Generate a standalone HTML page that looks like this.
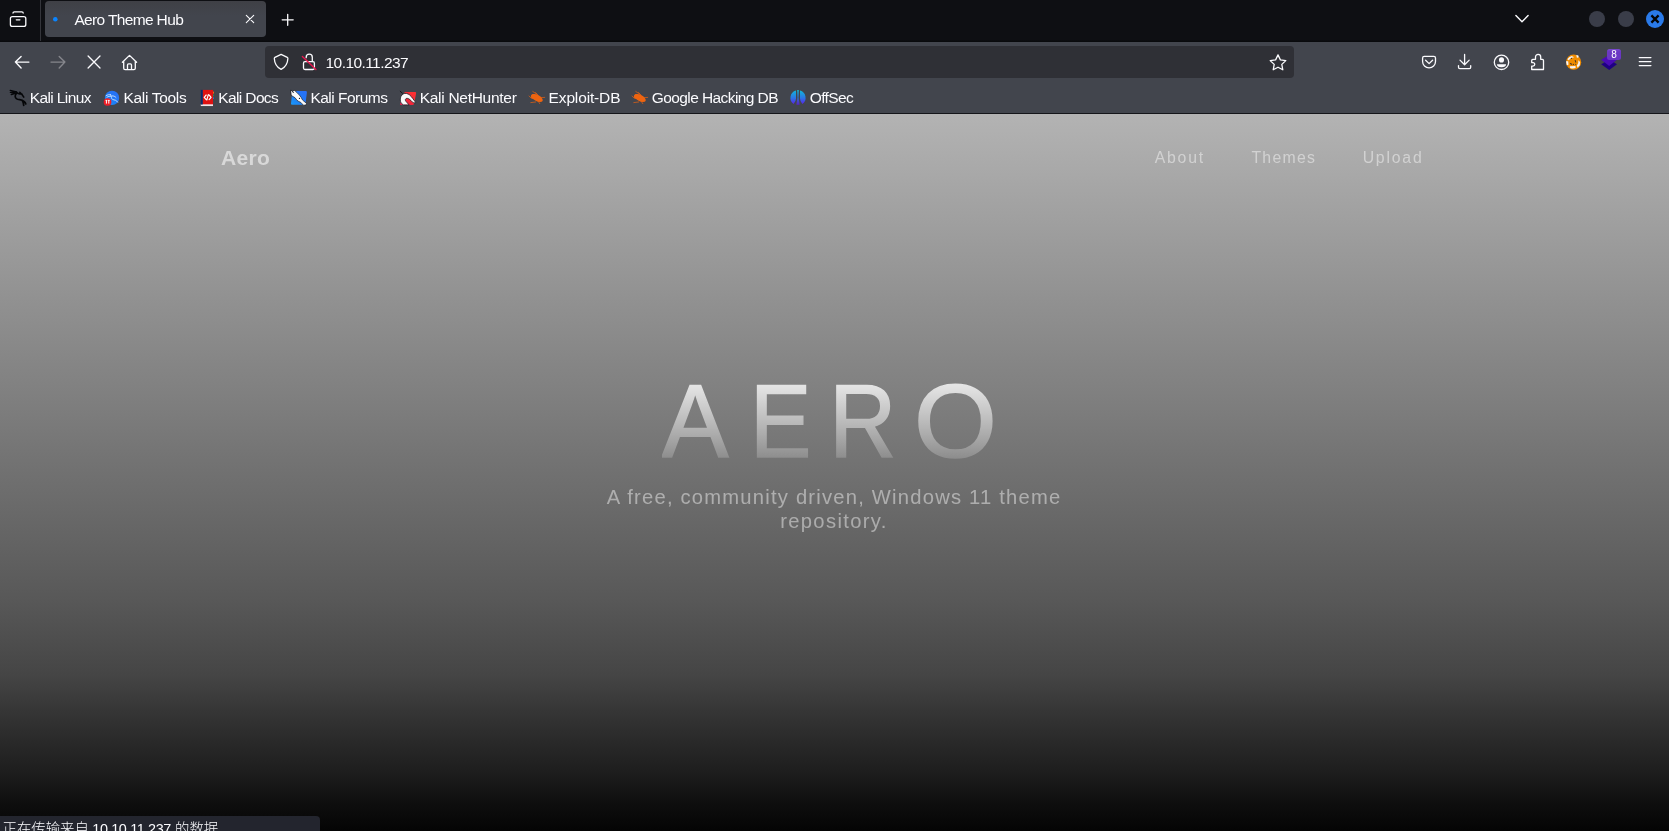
<!DOCTYPE html>
<html lang="zh">
<head>
<meta charset="utf-8">
<title>Aero Theme Hub</title>
<style>
*{box-sizing:border-box;margin:0;padding:0}
html,body{width:1669px;height:831px;overflow:hidden;background:#0d0e12;font-family:"Liberation Sans","Noto Sans CJK SC",sans-serif;}
#chrome{position:absolute;left:0;top:0;width:1669px;height:114px;background:#42454d;color:#fbfbfe}
#tabbar{position:absolute;left:0;top:0;width:1669px;height:42px;background:linear-gradient(#0e0f13 40px,#090a0d 41px)}
#tabsep{position:absolute;left:40px;top:0;width:1px;height:41px;background:#34353b}
#tab{position:absolute;left:45px;top:1px;width:221px;height:36px;background:linear-gradient(to bottom,#3f4046,#42454d 40%);border-radius:4px}
#tabtitle{position:absolute;left:74px;top:10.5px;font-size:15.5px;line-height:18px;white-space:nowrap;color:#fbfbfe}
#urlbar{position:absolute;left:265px;top:46px;width:1029px;height:32px;background:#2f3036;border-radius:4px}
#url{position:absolute;left:327px;top:53.5px;font-size:15.5px;line-height:18px;color:#fbfbfe;white-space:nowrap}
#chromeline{position:absolute;left:0;top:113px;width:1669px;height:1px;background:#15161a}
.bm{position:absolute;top:88.5px;font-size:15.5px;line-height:18px;white-space:nowrap;color:#fbfbfe}
#tabtitle,#url,.bm,#status span,#logo,.nav,.sub,#badge{opacity:.999}
#icons{position:absolute;left:0;top:0;width:1669px;height:114px;overflow:visible}
#badge{position:absolute;left:1607px;top:49px;width:14px;height:11px;background:linear-gradient(#7a4bd0,#6b38c4 25%);border-radius:2.5px;color:#fff;font-size:10px;line-height:11px;text-align:center}
#page{position:absolute;left:0;top:114px;width:1669px;height:717px;overflow:hidden;
 background:linear-gradient(to bottom,#b3b3b3 0px,#7c7c7c 300px,#585858 486px,#4e4e4e 526px,#454545 561px,#363636 596px,#282828 631px,#1e1e1e 657px,#0f0f0f 687px,#040404 717px);}
#logo{position:absolute;left:222px;top:31.7px;font-size:21px;line-height:24px;font-weight:bold;color:rgba(255,255,255,.54);white-space:nowrap}
.nav{position:absolute;top:33.7px;font-size:15.8px;line-height:20px;color:rgba(255,255,255,.46);letter-spacing:1.2px;white-space:nowrap}
#h1{position:absolute;left:0;width:1669px;top:235px;height:146px;font-size:104px;line-height:146px;white-space:nowrap;overflow:visible}
#h1 span{display:inline-block;position:relative;vertical-align:top;width:100px;margin-right:-100px;top:0;height:146px;text-rendering:geometricPrecision;font-size:104px;line-height:146px;white-space:nowrap;transform-origin:0 0;
 background:linear-gradient(to bottom,#fff 10.5px,rgba(255,255,255,0) 132px);-webkit-background-clip:text;background-clip:text;color:transparent;-webkit-text-fill-color:transparent;-webkit-text-stroke:1.6px transparent}
.sub{position:absolute;font-size:20.2px;line-height:24px;letter-spacing:1.4px;color:rgba(255,255,255,.45);white-space:nowrap}
#s1{top:371.1px}#s2{top:394.7px}
#status{position:absolute;left:0;top:816px;width:320px;height:16px;background:#23252e;border-top-right-radius:4px;overflow:hidden}
#status{white-space:nowrap;font-size:14.4px;line-height:20px}
#status span{display:inline-block;position:relative;vertical-align:top;width:100px;margin-right:-100px;top:3.3px;color:#fbfbfe;font-size:14.4px;line-height:20px;white-space:nowrap;font-weight:300}
</style>
</head>
<body>
<div id="chrome">
 <div id="tabbar"></div>
 <div id="tabsep"></div>
 <div id="tab"></div>
 <div id="tabtitle" style="left:74.42px;letter-spacing:-0.646px">Aero Theme Hub</div>
 <div id="urlbar"></div>
 <div id="url" style="left:325.59px;letter-spacing:-0.576px">10.10.11.237</div>
 <div class="bm" id="b1" style="left:29.65px;letter-spacing:-0.592px">Kali Linux</div>
 <div class="bm" id="b2" style="left:123.38px;letter-spacing:-0.298px">Kali Tools</div>
 <div class="bm" id="b3" style="left:218.3px;letter-spacing:-0.627px">Kali Docs</div>
 <div class="bm" id="b4" style="left:310.38px;letter-spacing:-0.509px">Kali Forums</div>
 <div class="bm" id="b5" style="left:419.65px;letter-spacing:-0.277px">Kali NetHunter</div>
 <div class="bm" id="b6" style="left:548.59px;letter-spacing:-0.143px">Exploit-DB</div>
 <div class="bm" id="b7" style="left:651.76px;letter-spacing:-0.588px">Google Hacking DB</div>
 <div class="bm" id="b8" style="left:809.66px;letter-spacing:-0.581px">OffSec</div>
 <div id="chromeline"></div>
 <svg id="icons" width="1669" height="114" viewBox="0 0 1669 114" fill="none" stroke="#fbfbfe" stroke-width="1.3" stroke-linecap="round" stroke-linejoin="round">
<!--ICONS_START-->
 <defs>
  <linearGradient id="og" gradientUnits="userSpaceOnUse" x1="0" y1="90" x2="0" y2="105"><stop offset="0" stop-color="#0fb9d8"/><stop offset=".55" stop-color="#2d74e6"/><stop offset="1" stop-color="#5f14e8"/></linearGradient>
  <linearGradient id="kt" x1="1" y1="0" x2="0" y2="1"><stop offset="0" stop-color="#2a6ff5"/><stop offset=".5" stop-color="#1f78f5"/><stop offset="1" stop-color="#1a9af8"/></linearGradient>
 <linearGradient id="nh" x1="1" y1="0" x2="0" y2="1"><stop offset="0" stop-color="#ff3232"/><stop offset=".5" stop-color="#f52a36"/><stop offset="1" stop-color="#df1a4c"/></linearGradient>
 </defs>
 <!-- firefox view -->
 <rect x="10.4" y="16.6" width="15.4" height="9.8" rx="2"/>
 <path d="M13 13.1q0-1.2 1.4-1.2h7.4q1.4 0 1.4 1.2"/>
 <path d="M16.3 19.8h3.6"/>
 <!-- tab favicon dot, close, plus -->
 <circle cx="55.3" cy="19.2" r="2.3" fill="#0a84ff" stroke="none"/>
 <path d="M246.300 15.300l7.400 7.400M253.700 15.300l-7.400 7.400" stroke-width="1.100"/>
 <path d="M282.200 19.800h11M287.700 14.300v11" stroke-width="1.300"/>
 <path d="M1515.9 15.6l6.1 6.1 6.1-6.1" stroke-width="1.4"/>
 <circle cx="1597" cy="19" r="8" fill="#3a3d49" stroke="none"/>
 <circle cx="1626" cy="19" r="8" fill="#3a3d49" stroke="none"/>
 <circle cx="1655" cy="19" r="9" fill="#2a7ae9" stroke="none"/>
 <path d="M1651.4 15.4l7.2 7.2M1658.600 15.4l-7.2 7.2" stroke="#050608" stroke-width="2.3" stroke-linecap="butt"/>
 <!-- nav buttons -->
 <path d="M15.400 62.1h13.5M21.1 56.400l-5.700 5.700 5.700 5.800" stroke-width="1.400"/>
 <path d="M51 62.1h13.900M59.200 56.400l5.700 5.700-5.700 5.800" stroke="#85868c" stroke-width="1.400"/>
 <path d="M88.100 56l11.900 12M100 56l-11.900 12" stroke-width="1.300"/>
 <path d="M122.400 62.300l7.100-6.900 7.100 6.900M123.700 61.300v7q0 1.400 1.400 1.400h8.800q1.400 0 1.400-1.400v-7M127.500 69.500v-4.600q0-1 1-1h2q1 0 1 1v4.600" stroke-width="1.300"/>
 <!-- shield -->
 <path d="M281.100 54.400l6.200 3q.600.300.600 1c-.200 4.800-2.300 8.700-6.800 11-4.500-2.300-6.600-6.200-6.800-11q0-.700.600-1z" stroke-width="1.250"/>
 <!-- lock -->
 <rect x="303.500" y="61.700" width="10.900" height="7.800" rx="1.500" stroke-width="1.300"/>
 <path d="M306.200 57.700v-.500a3.050 3.050 0 0 1 6.100 0v4.300" stroke-width="1.300"/>
 <path d="M302.400 56.400l13.500 13.100" stroke="#e8174f" stroke-width="1.400"/>
 <!-- star -->
 <path d="M1278 54.900l2.400 5 5.400.7-4 3.800 1 5.400-4.800-2.600-4.800 2.600 1-5.400-4-3.800 5.400-.7z" stroke-width="1.300"/>
 <!-- pocket -->
 <path d="M1422.600 58.100q0-1.700 1.700-1.700h9.500q1.700 0 1.700 1.700v3.300a6.450 6.450 0 0 1-12.900 0z" stroke-width="1.300"/>
 <path d="M1425.600 60.300l3.500 3.300 3.500-3.300" stroke-width="1.300"/>
 <!-- download -->
 <path d="M1464.600 54.400v10M1460 60.100l4.600 4.600 4.600-4.600M1458.500 65.600v1.700q0 1.300 1.300 1.300h9.600q1.300 0 1.300-1.300v-1.700" stroke-width="1.300"/>
 <!-- account -->
 <circle cx="1501.500" cy="62.300" r="7.200" stroke-width="1.300"/>
 <circle cx="1501.500" cy="59.900" r="2.550" fill="#fbfbfe" stroke="none"/>
 <path d="M1496.900 64.300h9.200a4.600 3 0 0 1-9.200 0z" fill="#fbfbfe" stroke="none"/>
 <!-- extensions puzzle -->
 <path d="M1531.700 69.500h11.800v-9.100q0-1.100-1.100-1.100h-1.700v-2.300a2.600 2.600 0 0 0-5.200 0v2.300h-2.700q-1.100 0-1.100 1.100v2.200h1.300a1.750 1.750 0 0 1 0 3.500h-1.300z" stroke-width="1.300"/>
 <!-- fox icon -->
 <circle cx="1573.600" cy="62.200" r="7.600" fill="#f08c00" stroke="none"/>
 <path d="M1567.400 59.300q1.500-2.700 4.300-3.400l2.500 1.300-3.200.700-2.300 2.300zM1576.300 54.900l2.100.600.200 2-1.700.300zM1566 61.200h2.200l.300 3.600-1.700.400zM1569.700 66.300l5.700-.200.400 1.700q-2.800 1.300-5.600.100zM1578.300 60.200l1.800 1.700-.400 3.600-2.200 2.300-.600-2.300 1.400-2.600z" fill="#f4f4f8" stroke="none"/>
 <path d="M1575.200 60.500l.6 1.600M1570.400 63.500l1.300.800M1573.400 64.400h.1M1575.600 64.300h.1M1571.400 58.400h.1" stroke="#4a3a2a" stroke-width="1.100"/>
 <!-- layers -->
 <path d="M1601.200 64.200l8-4.800 7.800 4.800-7.800 5.700z" fill="#1f0083" stroke="none"/>
 <path d="M1601.200 59.800l8-4.800 7.800 4.800-7.800 6.100z" fill="#4a0bb6" stroke="none"/>
 <!-- hamburger -->
 <path d="M1639.300 57.600h11.600M1639.300 61.600h11.600M1639.300 65.600h11.600" stroke-width="1.400"/>
 <!-- kali linux dragon -->
 <g stroke="#050608" stroke-width="1.500">
  <path d="M10.200 90.400l6.400 1.500-6.200.500 5.400.500-4.600 1.600 5-1.300" stroke-width="1.300" fill="#050608"/>
  <path d="M16.400 92.400c1.300.900 2.300 1.400 3.400 1.500 1.100.100 1.700-.100 2.300.300M19.800 92.300c1.600 1.300 3 3 4 4.900"/>
  <path d="M16.600 93.300c-1 .800-1.500 1.900-1.400 3.200.200 1.900 1.800 3 4.400 3.200 2.200.200 3.500.800 4.700 1.900.900.800 1.300 1.600 1.500 2.400M22.300 100.600c.900 1.500 1.300 3.200 1.400 4.800" stroke-width="1.700"/>
 </g>
 <!-- kali tools -->
 <circle cx="112" cy="97.900" r="7.200" fill="url(#kt)" stroke="none"/>
 <g stroke="#dbe9fb" stroke-width="1" opacity=".85">
  <path d="M106.200 95.600c1.600-.900 3-1.200 4.400-.900M107 97.200c1.300-.800 2.500-1.100 3.700-1M110.700 94.700c.500 1 .700 1.900.800 2.800.100 1 .400 1.600 1 1.900 1 .500 2 .500 2.900.800 1 .400 1.700 1.100 2.300 2M112.200 95.900c1.500-.100 2.700.400 3.800 1.600"/>
 </g>
 <circle cx="107.550" cy="102" r="3.850" fill="#ee1c25" stroke="none"/>
 <path d="M106.400 100.400v3.200M108.800 100.400v3.200M105.600 100.400h1.700M108 100.400h1.700" stroke="#fff" stroke-width="1" stroke-linecap="butt"/>
 <!-- kali docs -->
 <path d="M212 91.500h1.400q.600 0 .600.600v1q0 .600-.600.600h-1.400z" fill="#f26a12" stroke="none"/>
 <path d="M212 94.400h1.400q.600 0 .600.500v.800q0 .500-.600.500h-1.400z" fill="#2d8a4e" stroke="none"/>
 <path d="M212 97.300h1.400q.600 0 .600.500v.800q0 .500-.600.500h-1.400z" fill="#3567c8" stroke="none"/>
 <rect x="200.800" y="104" width="12.200" height="2.050" fill="#ece4e8" stroke="none"/>
 <rect x="202.500" y="89.900" width="10.500" height="14.400" fill="#df1212" stroke="none"/>
 <rect x="200.800" y="89.900" width="1.900" height="14.700" fill="#0b2a6c" stroke="none"/>
 <path d="M206.200 95l-2 2.300 2 2.300M209.100 95l2 2.300-2 2.300M208.300 94.600l-1.500 5.400" stroke="#fff" stroke-width="1.150"/>
 <!-- kali forums -->
 <path d="M293.600 91h12q1.500 0 1.300 1.400l-1.400 11q-.200 1.400-1.700 1.400h-11.600q-1.400 0-1.200-1.400l1.200-11q.100-1.400 1.400-1.400z" fill="url(#kt)" stroke="none"/>
 <path d="M290.900 90.300l2.600.600 1.200-.400c1.600 1.500 3.300 3 4.700 4.600 1.300 1.500 2.400 3.200 3.200 5l3.900 3.300-.600 1.700-2.500.100-2.600-2.800c-1.400-.500-2.700-1.200-3.800-2.100l-1.900-2.500-3.700-2.300z" fill="#fafafa" stroke="#1d2027" stroke-width=".700"/>
 <circle cx="299.500" cy="98.400" r=".700" fill="#1d2027" stroke="none"/>
 <path d="M291.700 90.700l1.700 2" stroke="#1d2027" stroke-width="1"/>
 <!-- kali nethunter -->
 <path d="M405.600 91.900h9.400q1.300 0 1.100 1.300l-1.900 10.400q-.200 1.300-1.500 1.300h-11.800q-1.200 0-.800-1.200l4.200-10.900q.400-.900 1.300-.900z" fill="url(#nh)" stroke="none"/>
 <path d="M402.900 104.700c-1.600-1.200-2.500-2.800-2.600-4.800-.100-2.700 1-4.800 2.900-5.900 2-1.100 4.400-.600 6.400.900 1.200 1 2.200 2.200 3.100 3.500l3.100 4.200c-1.400.500-2.700.200-3.600-.700-1-1.100-1.900-2.100-3-2.800-1.300-.800-2.500-1-3.300-.400-.800.700-.700 1.700 0 2.600l3 3.400z" fill="#fafafa" stroke="#1f2128" stroke-width=".800"/>
 <path d="M400.200 91.300l2.200 1.900" stroke="#14161a" stroke-width="1"/>
 <!-- exploit-db bugs -->
 <g stroke="#ee6410">
  <ellipse cx="537.100" cy="98.100" rx="6.200" ry="3.100" transform="rotate(28 537.100 98.100)" fill="#ee6410" stroke="none"/>
  <circle cx="533.400" cy="96.400" r="2.500" fill="#ee6410" stroke="none"/>
  <path d="M532.800 91.500l3.800 2.600M535.500 92.500l2.500 2.500M529.100 96l2 2.100M540.300 97.700l4.400-.300M530.800 102.600l4.900-.600M538.300 101.400l1.500 2.300" stroke-width=".900" opacity=".75"/>
 </g>
 <g transform="translate(103 0)" stroke="#ee6410">
  <ellipse cx="537.100" cy="98.100" rx="6.200" ry="3.100" transform="rotate(28 537.100 98.100)" fill="#ee6410" stroke="none"/>
  <circle cx="533.400" cy="96.400" r="2.500" fill="#ee6410" stroke="none"/>
  <path d="M532.800 91.500l3.800 2.600M535.500 92.500l2.500 2.500M529.100 96l2 2.100M540.300 97.700l4.400-.300M530.800 102.600l4.900-.600M538.300 101.400l1.500 2.300" stroke-width=".900" opacity=".75"/>
 </g>
 <!-- offsec -->
 <g fill="url(#og)" stroke="none">
  <path d="M796 90.500a7.600 7.600 0 0 0-2.400 13.500q2.400-2.700 2.400-5.500z"/>
  <path d="M800 90.500a7.600 7.600 0 0 1 2.400 13.500q-2.400-2.700-2.400-5.500z"/>
  <path d="M797 90h2l-.400 7.500 1 7.200h-3.200l1-7.200z" opacity=".8"/>
 </g>
<!--ICONS_END-->
 </svg>
 <div id="badge">8</div>
</div>
<div id="page">
 <div id="logo" style="left:221.09px;letter-spacing:0.261px">Aero</div>
 <div class="nav" id="n1" style="left:1154.64px;letter-spacing:1.813px">About</div>
 <div class="nav" id="n2" style="left:1251.43px;letter-spacing:1.288px">Themes</div>
 <div class="nav" id="n3" style="left:1362.64px;letter-spacing:1.802px">Upload</div>
 <div id="h1"><span id="lA" style="left:660px;transform:translateX(1.8px) scale(0.962,1)">A</span><span id="lE" style="left:749px;transform:translateX(0.92px) scale(0.8836,1)">E</span><span id="lR" style="left:829px;transform:translateX(0.32px) scale(0.893,1)">R</span><span id="lO" style="left:913px;transform:translateX(0.92px) scale(1.0246,1)">O</span></div>
 <div class="sub" id="s1" style="left:606.87px;letter-spacing:1.216px">A free, community driven, Windows 11 theme</div>
 <div class="sub" id="s2" style="left:780.13px;letter-spacing:1.356px">repository.</div>
</div>
<div id="status"><span id="c1" style="left:2.5px">正在传输来自</span> <span id="c2" style="left:88.3px;top:2.8px;letter-spacing:-0.36px">10.10.11.237</span> <span id="c3" style="left:167px">的数据…</span></div>
</body>
</html>
